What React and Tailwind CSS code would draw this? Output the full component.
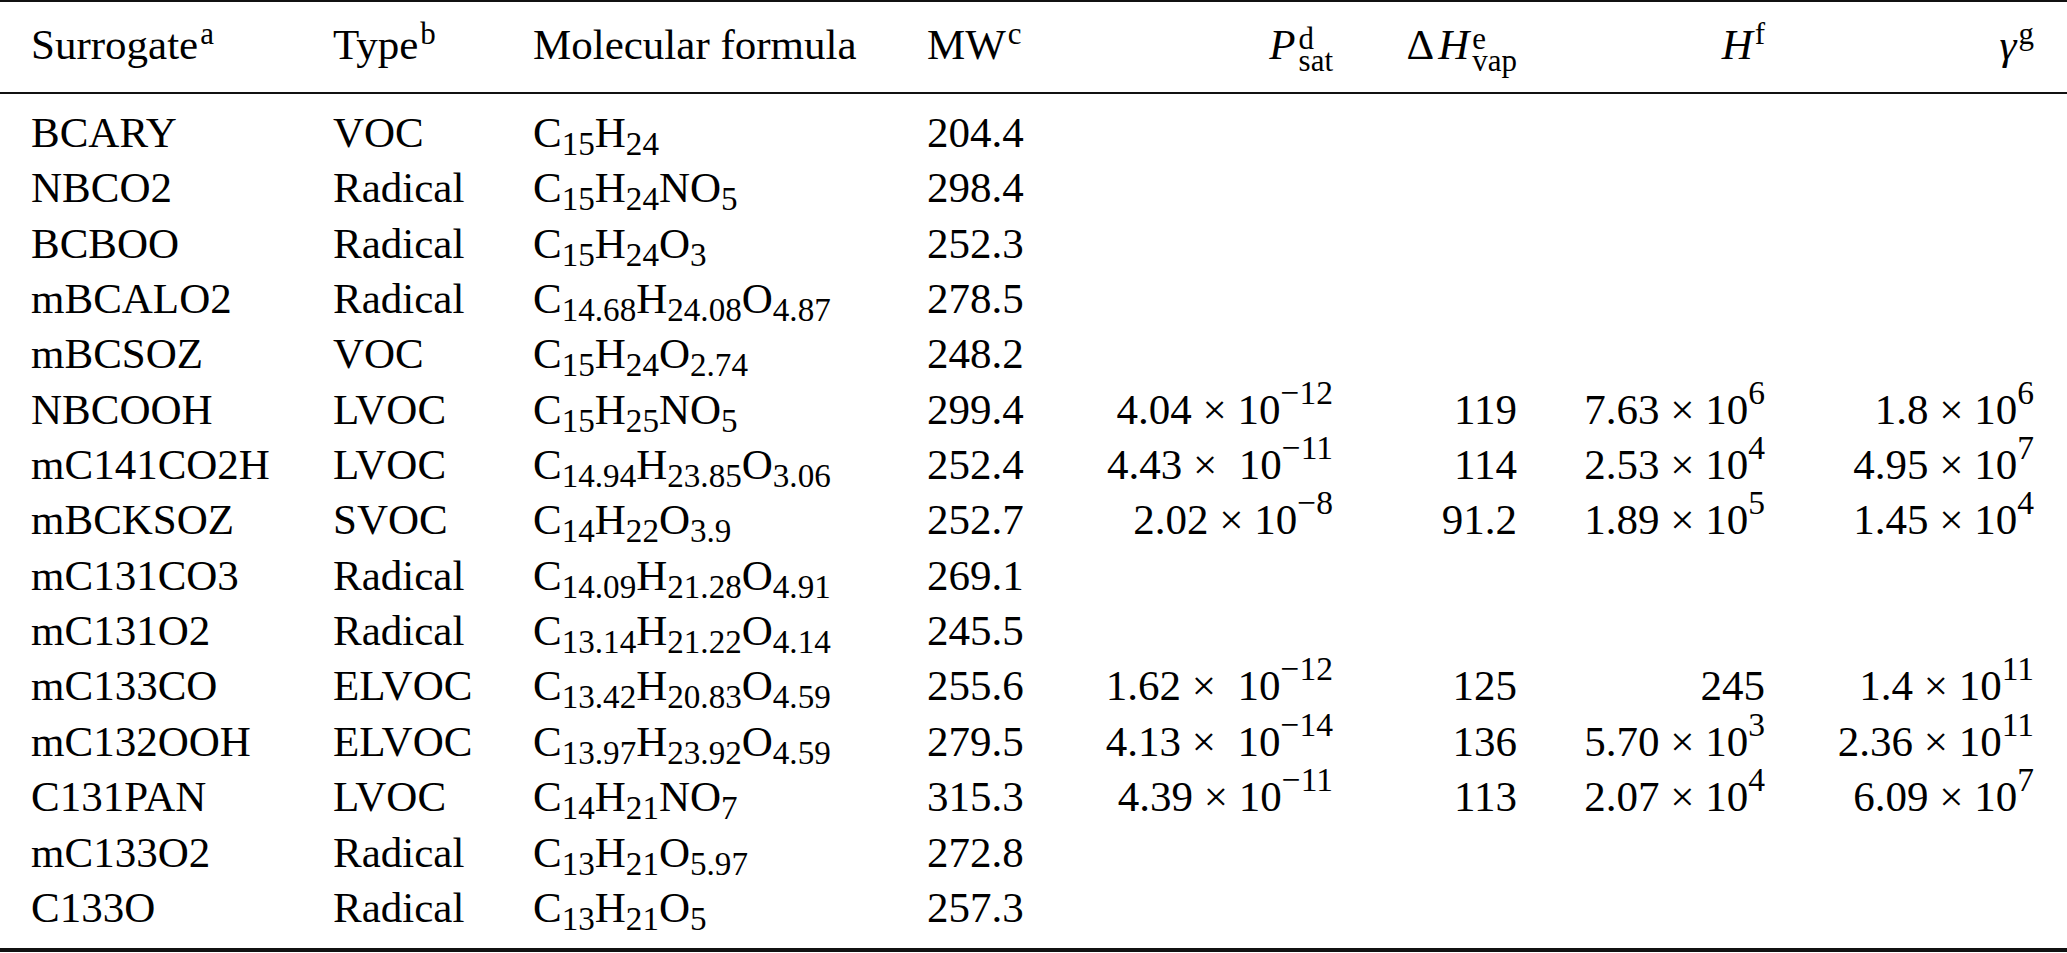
import React from "react";

// surrogate species table
const rows = [
  { name: "BCARY", type: "VOC", formula: "C15H24", mw: "204.4" },
  { name: "NBCO2", type: "Radical", formula: "C15H24NO5", mw: "298.4" },
  { name: "BCBOO", type: "Radical", formula: "C15H24O3", mw: "252.3" },
  { name: "mBCALO2", type: "Radical", formula: "C14.68H24.08O4.87", mw: "278.5" },
  { name: "mBCSOZ", type: "VOC", formula: "C15H24O2.74", mw: "248.2" },
  {
    name: "NBCOOH",
    type: "LVOC",
    formula: "C15H25NO5",
    mw: "299.4",
    psat: { m: "4.04", e: "−12" },
    hvap: "119",
    h: { m: "7.63", e: "6" },
    gamma: { m: "1.8", e: "6" },
  },
  {
    name: "mC141CO2H",
    type: "LVOC",
    formula: "C14.94H23.85O3.06",
    mw: "252.4",
    psat: { m: "4.43", e: "−11", wide: true },
    hvap: "114",
    h: { m: "2.53", e: "4" },
    gamma: { m: "4.95", e: "7" },
  },
  {
    name: "mBCKSOZ",
    type: "SVOC",
    formula: "C14H22O3.9",
    mw: "252.7",
    psat: { m: "2.02", e: "−8" },
    hvap: "91.2",
    h: { m: "1.89", e: "5" },
    gamma: { m: "1.45", e: "4" },
  },
  { name: "mC131CO3", type: "Radical", formula: "C14.09H21.28O4.91", mw: "269.1" },
  { name: "mC131O2", type: "Radical", formula: "C13.14H21.22O4.14", mw: "245.5" },
  {
    name: "mC133CO",
    type: "ELVOC",
    formula: "C13.42H20.83O4.59",
    mw: "255.6",
    psat: { m: "1.62", e: "−12", wide: true },
    hvap: "125",
    h: "245",
    gamma: { m: "1.4", e: "11" },
  },
  {
    name: "mC132OOH",
    type: "ELVOC",
    formula: "C13.97H23.92O4.59",
    mw: "279.5",
    psat: { m: "4.13", e: "−14", wide: true },
    hvap: "136",
    h: { m: "5.70", e: "3" },
    gamma: { m: "2.36", e: "11" },
  },
  {
    name: "C131PAN",
    type: "LVOC",
    formula: "C14H21NO7",
    mw: "315.3",
    psat: { m: "4.39", e: "−11" },
    hvap: "113",
    h: { m: "2.07", e: "4" },
    gamma: { m: "6.09", e: "7" },
  },
  { name: "mC133O2", type: "Radical", formula: "C13H21O5.97", mw: "272.8" },
  { name: "C133O", type: "Radical", formula: "C13H21O5", mw: "257.3" },
];

const grid =
  "grid grid-cols-[333px_200px_394px_113px_293px_184px_248px_302px] leading-[55.36px] whitespace-nowrap";

function HSup({ children }) {
  return <span className="relative -top-[15px] ml-[2px] text-[0.72em] leading-none">{children}</span>;
}

// superscript stacked over subscript, e.g. P_sat^d
function Stack({ sup, sub }) {
  return (
    <span className="relative -top-[10px] -mb-[12px] ml-[3px] inline-flex flex-col items-start text-left text-[0.72em] leading-[0.7]">
      <span>{sup}</span>
      <span>{sub}</span>
    </span>
  );
}

function Formula({ f }) {
  const parts = [...f.matchAll(/([A-Z][a-z]?)([\d.]*)/g)];
  return (
    <>
      {parts.map(([, el, n], i) => (
        <span key={i}>
          {el}
          {n && <span className="relative top-[8px] text-[0.77em] leading-none">{n}</span>}
        </span>
      ))}
    </>
  );
}

function Sci({ v }) {
  if (!v) return null;
  if (typeof v === "string") return <>{v}</>;
  return (
    <>
      {v.m + (v.wide ? " ×\u00a0\u00a010" : " × 10")}
      <span className="relative -top-[20px] text-[0.78em] leading-none">{v.e}</span>
    </>
  );
}

export default function App() {
  return (
    <div className="w-[2067px] bg-white text-black font-['Liberation_Serif',serif] text-[43px]">
      <div className="border-t-2 border-b-2 border-[#111] pt-[15px] pb-[19.5px]">
        <div className={grid}>
          <div className="pl-[31px]">
            Surrogate<HSup>a</HSup>
          </div>
          <div>
            Type<HSup>b</HSup>
          </div>
          <div>Molecular formula</div>
          <div>
            MW<HSup>c</HSup>
          </div>
          <div className="text-right">
            <i>P</i>
            <Stack sup="d" sub="sat" />
          </div>
          <div className="text-right">
            Δ<i className="ml-[4px]">H</i>
            <Stack sup="e" sub="vap" />
          </div>
          <div className="text-right">
            <i>H</i>
            <HSup>f</HSup>
          </div>
          <div className="text-right pr-[33px]">
            <i>γ</i>
            <HSup>g</HSup>
          </div>
        </div>
      </div>

      <div className="pt-[11px] pb-[12.6px] border-b-4 border-[#111]">
        {rows.map((r) => (
          <div key={r.name} className={grid}>
            <div className="pl-[31px]">{r.name}</div>
            <div>{r.type}</div>
            <div>
              <Formula f={r.formula} />
            </div>
            <div>{r.mw}</div>
            <div className="text-right">
              <Sci v={r.psat} />
            </div>
            <div className="text-right">{r.hvap}</div>
            <div className="text-right">
              <Sci v={r.h} />
            </div>
            <div className="text-right pr-[33px]">
              <Sci v={r.gamma} />
            </div>
          </div>
        ))}
      </div>
    </div>
  );
}
